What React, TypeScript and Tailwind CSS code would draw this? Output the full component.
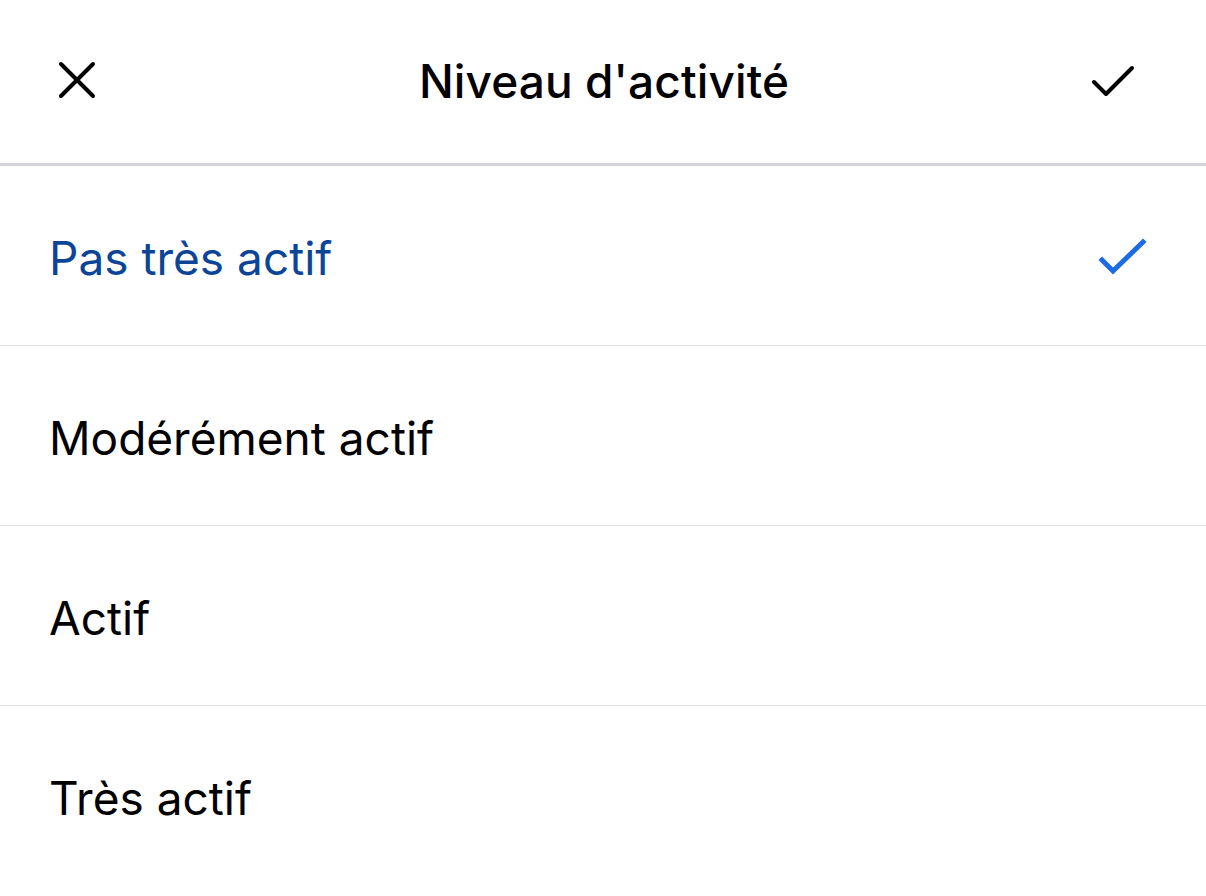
const options = ['Pas très actif', 'Modérément actif', 'Actif', 'Très actif'];

function CloseIcon() {
  return (
    <svg width="48" height="48" viewBox="0 0 48 48" fill="none" stroke="#000" strokeWidth="4" strokeLinecap="round">
      <path d="M8 8 40 40M40 8 8 40" />
    </svg>
  );
}

function DoneIcon() {
  return (
    <svg width="48" height="48" viewBox="0 0 48 48" fill="none" stroke="#000" strokeWidth="4" strokeLinecap="round" strokeLinejoin="round">
      <path d="M5 26 17 38 43 12" />
    </svg>
  );
}

function SelectedIcon() {
  return (
    <svg width="56" height="56" viewBox="0 0 56 56" fill="none" stroke="#1d6ae5" strokeWidth="5" strokeLinecap="square" strokeLinejoin="miter">
      <path d="M8 32 19 43 49 14" />
    </svg>
  );
}

export default function App() {
  const selected = 0;

  return (
    <div className="w-[1206px] h-[896px] bg-white overflow-hidden" style={{ fontFamily: 'Inter, "Noto Sans", sans-serif' }}>
      <div className="h-[166px] flex items-center justify-between pl-[53px] pr-[69px] pb-[3px] border-b-[3px] border-[#d4d4d8]">
        <CloseIcon />
        <h1 className="text-[46px] font-medium text-black tracking-[0.1px] pt-[2px] pl-[18px]">Niveau d'activité</h1>
        <DoneIcon />
      </div>
      <ul>
        {options.map((opt, idx) => (
          <li
            key={opt}
            className={`h-[180px] flex items-center justify-between pl-[49px] pr-[56px] ${idx < options.length - 1 ? 'border-b border-[#e0e0e0]' : ''}`}
          >
            <span className={`text-[46px] pt-[5px] ${idx === selected ? 'text-[#0c4598]' : 'text-black'}`}>{opt}</span>
            {idx === selected && <SelectedIcon />}
          </li>
        ))}
      </ul>
    </div>
  );
}
